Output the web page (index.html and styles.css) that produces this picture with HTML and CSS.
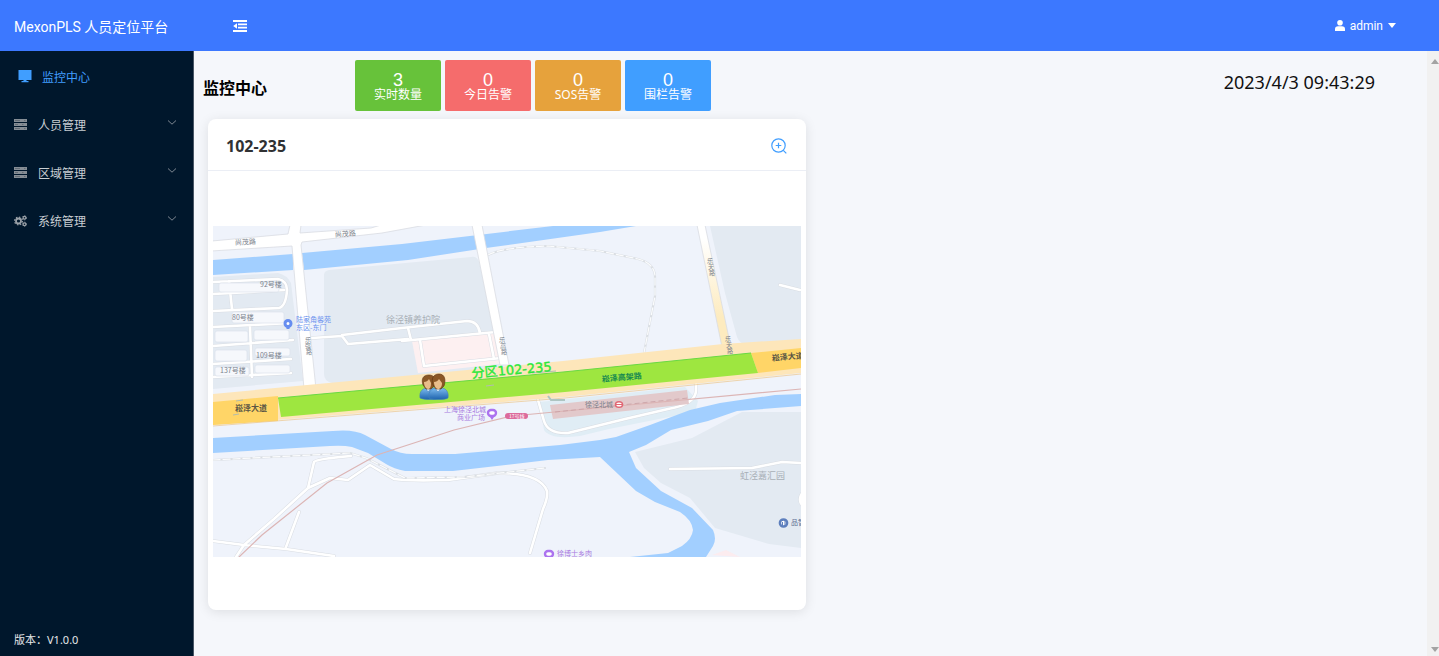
FILE: index.html
```html
<!DOCTYPE html>
<html lang="zh-CN">
<head>
<meta charset="utf-8">
<title>MexonPLS 人员定位平台</title>
<link rel="stylesheet" href="styles.css">
</head>
<body>
<header class="topbar">
  <div class="brand">MexonPLS 人员定位平台</div>
  <button class="collapse" type="button" aria-label="折叠菜单">
    <svg viewBox="0 0 14 12" width="14" height="12"><path d="M0 1h14M5 4.400h9M5 7.600h9M0 11h14" stroke="#fff" stroke-width="1.800"/><path d="M4 3.200v5.600L.2 6z" fill="#fff"/></svg>
  </button>
  <button class="user" type="button">
    <svg viewBox="0 0 10 11" width="10" height="11"><circle cx="5" cy="2.800" r="2.800" fill="#fff"/><path d="M0 11V9c0-2 1.200-2.800 3-2.800h4c1.800 0 3 .8 3 2.800v2z" fill="#fff"/></svg>
    <span>admin</span>
    <svg viewBox="0 0 8 5" width="8" height="5"><path d="M0 0h8L4 5z" fill="#fff"/></svg>
  </button>
</header>
<div class="shell">
  <aside class="sidebar">
    <nav class="menu">
      <a class="item active" href="#">
        <svg viewBox="0 0 14 14" width="14" height="14"><path d="M.5 0h13v10h-13zM5.500 10h3v1h2v1.200h-7V11h2z" fill="#409eff"/></svg>
        <span>监控中心</span>
      </a>
      <a class="item" href="#">
        <svg viewBox="0 0 13 12" width="13" height="12"><path d="M0 0h13v3H0zM0 4h13v3H0zM0 8h13v3H0z" fill="#858d95"/><path d="M1 1.500h5M1 5.500h3M1 9.500h5M10 1.500h1.500M8 5.500h1.500M10 9.500h1.500" stroke="#4c565f" stroke-width=".6"/></svg>
        <span>人员管理</span>
        <svg class="chev" viewBox="0 0 8 5" width="8" height="5"><path d="M0 .5l4 3.700L8 .5" fill="none" stroke="#7d8791"/></svg>
      </a>
      <a class="item" href="#">
        <svg viewBox="0 0 13 12" width="13" height="12"><path d="M0 0h13v3H0zM0 4h13v3H0zM0 8h13v3H0z" fill="#858d95"/><path d="M1 1.500h5M1 5.500h3M1 9.500h5M10 1.500h1.500M8 5.500h1.500M10 9.500h1.500" stroke="#4c565f" stroke-width=".6"/></svg>
        <span>区域管理</span>
        <svg class="chev" viewBox="0 0 8 5" width="8" height="5"><path d="M0 .5l4 3.700L8 .5" fill="none" stroke="#7d8791"/></svg>
      </a>
      <a class="item" href="#">
        <svg viewBox="0 0 13 12" width="13" height="12"><g fill="none" stroke="#9aa1a8"><circle cx="4.500" cy="6" r="2.500" stroke-width="1.800"/><circle cx="4.500" cy="6" r="3.900" stroke-width="1.200" stroke-dasharray="1.500 1.560"/><circle cx="10.500" cy="2.800" r="1.400" stroke-width="1.200"/><circle cx="10.500" cy="2.800" r="2.100" stroke-width=".8" stroke-dasharray="1.100 1.100"/><circle cx="10.500" cy="9.200" r="1.400" stroke-width="1.200"/><circle cx="10.500" cy="9.200" r="2.100" stroke-width=".8" stroke-dasharray="1.100 1.100"/></g></svg>
        <span>系统管理</span>
        <svg class="chev" viewBox="0 0 8 5" width="8" height="5"><path d="M0 .5l4 3.700L8 .5" fill="none" stroke="#7d8791"/></svg>
      </a>
    </nav>
    <div class="version">版本：V1.0.0</div>
  </aside>
  <main class="content">
    <div class="summary">
      <h1>监控中心</h1>
      <div class="stats">
        <button class="stat green" type="button"><b>3</b><span>实时数量</span></button>
        <button class="stat red" type="button"><b>0</b><span>今日告警</span></button>
        <button class="stat orange" type="button"><b>0</b><span>SOS告警</span></button>
        <button class="stat blue" type="button"><b>0</b><span>围栏告警</span></button>
      </div>
      <time class="clock">2023/4/3 09:43:29</time>
    </div>
    <div class="cards">
      <section class="card">
        <div class="card-head">
          <h2>102-235</h2>
          <button class="zoom" type="button" aria-label="放大">
            <svg viewBox="0 0 16 16" width="16" height="16"><g fill="none" stroke="#409eff" stroke-width="1.200"><circle cx="7.500" cy="7.500" r="6.700"/><path d="M12.300 12.300l3 3M7.500 4.700v5.600M4.700 7.500h5.600"/></g></svg>
          </button>
        </div>
        <div class="card-body">
          <svg class="map" viewBox="213 226 588 331" role="img" aria-label="102-235 分区地图">
            <defs><linearGradient id="ramp" x1="0" y1="0" x2="0" y2="1"><stop offset=".1" stop-color="#fff"/><stop offset=".7" stop-color="#fdebbf"/></linearGradient>
            <linearGradient id="shirt" x1="0" y1="0" x2="0" y2="1"><stop offset="0" stop-color="#7dbcf0"/><stop offset="1" stop-color="#1d62ad"/></linearGradient></defs>
            <path d="M213 226h588v331H213z" fill="#eff3fb"/>
            <!-- blocks -->
            <g fill="#e3eaf2">
              <path d="M324 275q0-4 5-5l142-13q6-1 8 5l17 77 6 33-30 7-140 4q-8-2-8-9z"/>
              <path d="M213 277l65-4q9 2 13 10l12 98-90 8z"/>
              <path d="M710 226h91v116l-56 2q-5 0-8-7l-12-44z"/>
              <path d="M635 452l57-14 50-26h59v136l-32-4-54-16-25-30-29-15-17-15z"/>
            </g>
            <path d="M539 402l146-15 13 14-3 11-26 5-60 12-29 7q-30 4-36-6z" fill="#e0edf5"/>
            <path d="M412 341l85-10 10 32-89 10z" fill="#fdf0f1"/>
            <path d="M712 555l14-5 14 7z" fill="#fcecef"/>
            <!-- waterways -->
            <g fill="#a2cfff">
              <path d="M213 260l80-6v16l-80 5z"/>
              <path d="M302 253l100-9 151-18h83l-36 6-114 16-78 12-104 10z"/>
              <path d="M213 438L333 431Q354 429 365 435L391 449Q400 454 412 454H455L560 445 600 440 616 437 650 425 690 410 720 403 775 395 801 394V406L737 411 708 421 671 430 646 445 629 452 636 468 661 491 692 508 713 530Q717 539 713 546L706 557H630L668 553 682 546Q692 539 693 530 692 520 680 512L655 502 636 491 600 457 548 460 453 471H405Q394 469 386 464L368 453 352 447Q343 445 330 446L213 453Z"/>
            </g>
            <!-- minor streets -->
            <g fill="none" stroke-linecap="round" stroke-linejoin="round">
              <g stroke="#d9dde3" stroke-width="3.600">
                <path id="lanes" d="M213 282l65-3q9 2 9 11-1 16-8 18l-66 3M213 294l71-4M229 281l3 28M213 327l77-4M213 346l80-6M213 364l78-5M213 377l78-4M250 327l2 50M312 338l30-2 6 8 60-5M342 335l60-7 65-7q11 0 13 12M408 328l3 12M402 341l94-9M420 340l4 26 77-8M489 334l5 25"/>
                <path id="paths" d="M213 541l31 4 42 4 48 7M236 557l8-12 30-26 34-31 22-10 18 2 22-15 24 14q12 2 54 1l50-7q42 0 49 18 1 7-4 18l-13 44M308 488l6-26q2-3 37-6M286 547l13-35M538 400l6 21q4 13 24 12l57-14 43-10q29-5 28-20l1-27M670 469l82-1 30-6 19 1M780 285l20 5M803 492q-6 8 0 14"/>
              </g>
              <g stroke="#fff" stroke-width="2.600"><use href="#lanes"/><use href="#paths"/></g>
              <g stroke="#dadee3" stroke-width="2.200"><path id="dash" d="M213 460l137-7 16 5 39 20 60-1 80-9M488 255q15-8 60-9l52 5 38 8q16 4 17 17v20l-11 57"/></g>
              <g stroke="#fbfcfd" stroke-width="1.200" stroke-dasharray="7 3"><use href="#dash"/></g>
            </g>
            <!-- buildings -->
            <g fill="#f6f8fc" stroke="#dce3ed" stroke-width=".7">
              <rect x="219" y="283" width="60" height="9" rx="2"/><rect x="232" y="312" width="52" height="11" rx="2"/><rect x="215" y="331" width="33" height="11" rx="2"/><rect x="254" y="330" width="35" height="10" rx="2"/><rect x="215" y="350" width="32" height="11" rx="2"/><rect x="255" y="348" width="35" height="8" rx="2"/><rect x="215" y="367" width="34" height="9" rx="2"/><rect x="255" y="365" width="35" height="8" rx="2"/>
            </g>
            <!-- main streets -->
            <g stroke="#d9dce2" stroke-width=".8" fill="#fff">
              <path d="M212 241l76-7 2-9h11l-1 8 71-5 10-3h45l-44 8-80 9-1 3 15 144h-12l-12-143-81 5z"/>
              <path d="M472 225h10l27 140h-9z"/>
              <path d="M697 225h8l28 132h-9z" fill="url(#ramp)"/>
            </g>
            <!-- expressway -->
            <path d="M213 394l94-9 256-24 160-17 78-5v34l-236 24-352 28z" fill="#fde6ba"/>
            <path d="M213 402l65-6v25l-65 4zM751 353l50-5v20l-43 5z" fill="#ffd567"/>
            <path d="M278 398l285-26 188-19 7 20-193 19-284 25z" fill="#9ee640"/>
            <path d="M278 398l285-26 188-19" fill="none" stroke="#69d943"/>
            <path d="M532 373l24-2M486 386l8-1M236 401l7-1M233 415l6-1" stroke="#b3bcae" stroke-width="1.200"/>
            <path d="M213 426l352-28 236-24" stroke="#edc689" fill="none" stroke-width=".7"/>
            <path d="M548 396l3 4h14" stroke="#aec5c2" fill="none" stroke-width="2"/>
            <!-- railway -->
            <path d="M550 405l137-15 2 14-136 15z" fill="#e2c9cb"/>
            <path d="M239 557l23-22 65-52 50-28 77-25 58-14 85-8 204-19" fill="none" stroke="#dcb5b5" stroke-width="1.200"/>
            <path d="M555 412l133-14" fill="none" stroke="#c9a0a5" stroke-dasharray="5 3" stroke-width=".8"/>
            <rect x="505" y="413" width="23" height="6" rx="3" fill="#dc6b9c"/>
            <!-- place labels -->
            <g class="place">
              <text x="235" y="245" transform="rotate(-3 235 245)">尚茂路</text>
              <text x="335" y="237" transform="rotate(-4 335 237)">尚茂路</text>
              <text x="260" y="287">92号楼</text><text x="232" y="320">80号楼</text><text x="256" y="358">109号楼</text><text x="220" y="373">137号楼</text>
              <g class="upright">
                <text x="305" y="342">乐</text><text x="305" y="348">强</text><text x="306" y="354">路</text>
                <text x="499" y="342">乐</text><text x="500" y="348">高</text><text x="501" y="354">路</text>
                <text x="707" y="263">乐</text><text x="708" y="269">天</text><text x="709" y="275">路</text>
                <text x="725" y="341">乐</text><text x="726" y="347">天</text><text x="727" y="353">路</text>
              </g>
              <text x="585" y="407">徐泾北城</text>
              <text class="wide faint" x="386" y="323">徐泾镇养护院</text>
              <text class="wide faint" x="740" y="479">虹泾嘉汇园</text>
              <text class="road" x="235" y="411">崧泽大道</text><text class="road" x="772" y="361" transform="rotate(-5 772 361)">崧泽大道</text>
              <text class="road teal" x="602" y="382" transform="rotate(-5 602 382)">崧泽高架路</text>
              <text class="sky" x="296" y="322">陆家角馨苑</text><text class="sky" x="296" y="330">东区-东门</text>
              <text class="violet" x="444" y="412">上海徐泾北城</text><text class="violet" x="457" y="420">商业广场</text>
              <text class="violet" x="557" y="556">徐博士乡肉</text>
              <text class="navy" x="791" y="525">品智</text>
              <text class="station" x="509" y="418">17号线</text>
            </g>
            <g fill="#fff">
              <g stroke="#668df0" stroke-width="3"><circle cx="288" cy="323.500" r="3"/><path d="M288 327v2"/></g>
              <g stroke="#ac73ef" stroke-width="2.400"><rect x="488" y="410" width="8" height="6" rx="3"/><rect x="545" y="551" width="8" height="6" rx="3"/></g>
              <path d="M490 417h4l-2 3z" fill="#ac73ef"/>
              <circle cx="783.500" cy="523" r="3.600" stroke="#5d7fbd" stroke-width="2.500"/><path d="M782.500 525v-3M785 525v-4" stroke="#5d7fbd"/>
              <ellipse cx="619" cy="404.500" rx="3.500" ry="2.800" stroke="#e16673" stroke-width="1.500"/><path d="M616 404.500h6" stroke="#e16673"/>
            </g>
            <text class="zone" x="472" y="378" transform="rotate(-5 472 378)">分区102-235</text>
            <!-- people marker -->
            <g stroke="#3f7fbd" stroke-width=".6">
              <path id="body" d="M420 398c-1-7 3-10 8-10h4c5 0 8 4 7 10-3 2-15 2-19 0z" fill="url(#shirt)"/><use href="#body" x="9"/>
              <path d="M425 387l3 5 4-5M434 387l4 5 4-5" fill="#e7f4ff"/>
              <path d="M423 385c-2-6 0-10 6-10 6 0 7 5 5 11l-3 3h-5z" fill="#8a5726" stroke="#5c3212"/><path d="M433 385c-2-6 0-11 6-11s7 6 5 12l-3 3h-5z" fill="#8a5726" stroke="#5c3212"/>
              <path d="M424 382c2 0 4-1 5-3l2 4c0 4-1 6-3 6s-4-3-4-7zM434 382c2 0 4-1 5-3l3 4c0 4-2 6-4 6s-4-3-4-7z" fill="#e9bd8a" stroke="none"/>
            </g>
          </svg>
        </div>
      </section>
    </div>
  </main>
  <div class="track" aria-hidden="true">
    <svg viewBox="0 0 8 5" width="8" height="5"><path d="M0 5h8L4 0z" fill="#a3a3a3"/></svg>
    <svg viewBox="0 0 8 5" width="8" height="5"><path d="M0 0h8L4 5z" fill="#a3a3a3"/></svg>
  </div>
</div>
</body>
</html>
```

FILE: styles.css
```css
* { box-sizing: border-box; }
body {
  margin: 0;
  height: 100vh;
  display: flex;
  flex-direction: column;
  font-family: "Noto Sans", "Noto Sans CJK SC", sans-serif;
  font-size: 12px;
  background: #f5f7fb;
}
button {
  font: inherit;
  color: inherit;
  background: none;
  border: 0;
  padding: 0;
}
svg { display: block; flex: none; }
h1, h2 { margin: 0; }

.topbar {
  display: flex;
  align-items: center;
  height: 51px;
  flex: none;
  padding-right: 43px;
  background: #3c78ff;
  color: #fff;
  font-family: Roboto, "Noto Sans CJK SC", sans-serif;
}
.brand {
  width: 233px;
  padding-left: 14px;
  font-size: 14px;
  white-space: nowrap;
}
.user {
  display: flex;
  align-items: center;
  gap: 5px;
  margin-left: auto;
}

.shell { flex: 1; display: flex; min-height: 0; }
.sidebar {
  width: 194px;
  flex: none;
  display: flex;
  flex-direction: column;
  justify-content: space-between;
  background: #00172c;
  border-right: 1px solid #4a5766;
}
.menu { padding-top: 2px; }
.item {
  display: flex;
  align-items: center;
  gap: 11px;
  height: 48px;
  padding: 0 17px 0 14px;
  color: #c9ced3;
  text-decoration: none;
}
.item.active { color: #409eff; padding-left: 18px; gap: 10px; }
.chev { margin: 0 0 5px auto; }
.version { padding: 0 14px 8px; font-size: 11px; line-height: 16px; color: #e6e8ea; }

.content { flex: 1; min-width: 0; overflow: hidden; }
.summary {
  display: flex;
  align-items: center;
  height: 68px;
  padding: 0 52px 0 9px;
}
.summary h1 { width: 152px; font-size: 16px; line-height: 24px; padding-top: 6px; }
.stats { display: flex; gap: 4px; }
.stat {
  display: flex;
  flex-direction: column;
  align-items: center;
  justify-content: center;
  width: 86px;
  height: 51px;
  padding-top: 3px;
  border-radius: 2px;
  color: #fff;
}
.stat b {
  font: 18px/16px "Liberation Sans", sans-serif;
}
.stat span { line-height: 14px; }
.green { background: #67c23a; }
.red { background: #f56c6c; }
.orange { background: #e6a23c; }
.blue { background: #409eff; }
.clock { margin-left: auto; font-size: 18px; line-height: 24px; color: #111; padding-bottom: 6px; }

.cards {
  display: grid;
  grid-template-columns: 1fr 1fr;
  gap: 9px;
  padding: 0 14px;
}
.card {
  background: #fff;
  border-radius: 8px;
  box-shadow: 0 2px 12px rgba(0, 0, 0, 0.1);
}
.card-head {
  display: flex;
  align-items: center;
  justify-content: space-between;
  height: 52px;
  padding: 2px 19px 0 18px;
  border-bottom: 1px solid #ebeef5;
  color: #303133;
}
.card-head h2 { font-size: 16px; line-height: 24px; }
.card-body { padding: 55px 5px 53px; }
.map { width: 100%; height: auto; }

.track {
  width: 12px;
  flex: none;
  display: flex;
  flex-direction: column;
  align-items: flex-end;
  justify-content: space-between;
  padding: 8px 0 4px;
  background: #f1f1f1;
}

.place { font: 7px "Noto Sans CJK SC", sans-serif; fill: #7b828c; }
.upright { font-size: 6px; }
.wide { font-size: 9px; }
.faint { fill: #a8afb6; }
.road { font-size: 8px; font-weight: 700; fill: #5a5544; }
.teal { fill: #178a50; }
.sky { fill: #6a91ee; }
.violet { fill: #a97be0; }
.navy { fill: #5f6f93; }
.station { font-size: 5px; fill: #fff; }
.zone {
  font: 13px "DejaVu Sans", "Noto Sans CJK SC", sans-serif;
  fill: #2be83c;
  stroke: #2be83c;
  stroke-width: 0.4;
}
```
